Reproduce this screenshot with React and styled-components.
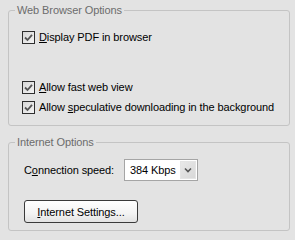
import React from "react";
import styled, { createGlobalStyle } from "styled-components";

const Global = createGlobalStyle`
  html, body { margin: 0; padding: 0; background: #e3e3e3; }
  body { font-family: "Liberation Sans", Arial, sans-serif; font-size: 11px; letter-spacing: -0.1px; color: #000; }
`;

const Page = styled.div`
  width: 295px;
  height: 240px;
  box-sizing: border-box;
  padding: 4px 6px 0 8px;
  background: #e3e3e3;
`;

const Group = styled.fieldset`
  margin: 0 0 ${(p) => p.$gap || 0}px 0;
  padding: 0;
  width: 282px;
  box-sizing: border-box;
  border: 1px solid #c4c4c4;
  border-radius: 3px;
  min-width: 0;
`;

const Legend = styled.legend`
  margin-left: 6px;
  padding: 0 2px;
  line-height: 13px;
  color: #6c6c6c;
`;

const Body = styled.div`
  padding: ${(p) => p.$pad};
  display: flex;
  flex-direction: column;
`;

const CheckRow = styled.label`
  display: flex;
  align-items: center;
  height: 20px;
  gap: 4px;
  margin-top: ${(p) => p.$top || 0}px;
`;

const Box = styled.span`
  width: 11px;
  height: 11px;
  border: 1px solid #2e2e2e;
  background: linear-gradient(135deg, #d6d6d6 0%, #f4f4f4 100%);
  display: flex;
  align-items: center;
  justify-content: center;
  flex: none;
`;

const U = styled.span`
  text-decoration: underline;
`;

const Row = styled.div`
  display: flex;
  align-items: center;
  height: 22px;
`;

const FieldLabel = styled.span`
  width: 100px;
  flex: none;
`;

const Select = styled.div`
  width: 74px;
  height: 22px;
  box-sizing: border-box;
  border: 1px solid #a5a5a5;
  background: #fff;
  display: flex;
  align-items: center;
  padding: 1px 1px 1px 5px;
`;

const SelectText = styled.span`
  flex: 1;
`;

const Arrow = styled.span`
  width: 16px;
  height: 18px;
  box-sizing: border-box;
  border: 1px solid #e4e4e4;
  background: linear-gradient(135deg, #e8e8e8 0%, #d8d8d8 100%);
  display: flex;
  align-items: center;
  justify-content: center;
`;

const Button = styled.button`
  margin-top: 19px;
  width: 114px;
  height: 23px;
  border: 1px solid #3a3a3a;
  border-radius: 3px;
  background: linear-gradient(180deg, #ffffff 0%, #f3f3f3 60%, #e2e2e2 100%);
  font-family: inherit;
  font-size: 11px;
  letter-spacing: inherit;
  color: #000;
  padding: 0;
  align-self: flex-start;
`;

const Check = () => (
  <svg width="9" height="9" viewBox="0 0 9 9">
    <path d="M1 4.5 L3.5 7 L8 1.8" fill="none" stroke="#555" strokeWidth="1.8" />
  </svg>
);

const Chevron = () => (
  <svg width="8" height="6" viewBox="0 0 8 6">
    <path d="M1 1.5 L4 4.5 L7 1.5" fill="none" stroke="#555" strokeWidth="1.6" />
  </svg>
);

export default function App() {
  return (
    <Page>
      <Global />
      <Group $gap={10}>
        <Legend>Web Browser Options</Legend>
        <Body $pad="10px 0 8px 13px">
          <CheckRow>
            <Box><Check /></Box>
            <span><U>D</U>isplay PDF in browser</span>
          </CheckRow>
          <CheckRow $top={30}>
            <Box><Check /></Box>
            <span><U>A</U>llow fast web view</span>
          </CheckRow>
          <CheckRow>
            <Box><Check /></Box>
            <span>Allow <U>s</U>peculative downloading in the background</span>
          </CheckRow>
        </Body>
      </Group>
      <Group>
        <Legend>Internet Options</Legend>
        <Body $pad="10px 0 7px 15px">
          <Row>
            <FieldLabel>C<U>o</U>nnection speed:</FieldLabel>
            <Select>
              <SelectText>384 Kbps</SelectText>
              <Arrow><Chevron /></Arrow>
            </Select>
          </Row>
          <Button><U>I</U>nternet Settings...</Button>
        </Body>
      </Group>
    </Page>
  );
}
